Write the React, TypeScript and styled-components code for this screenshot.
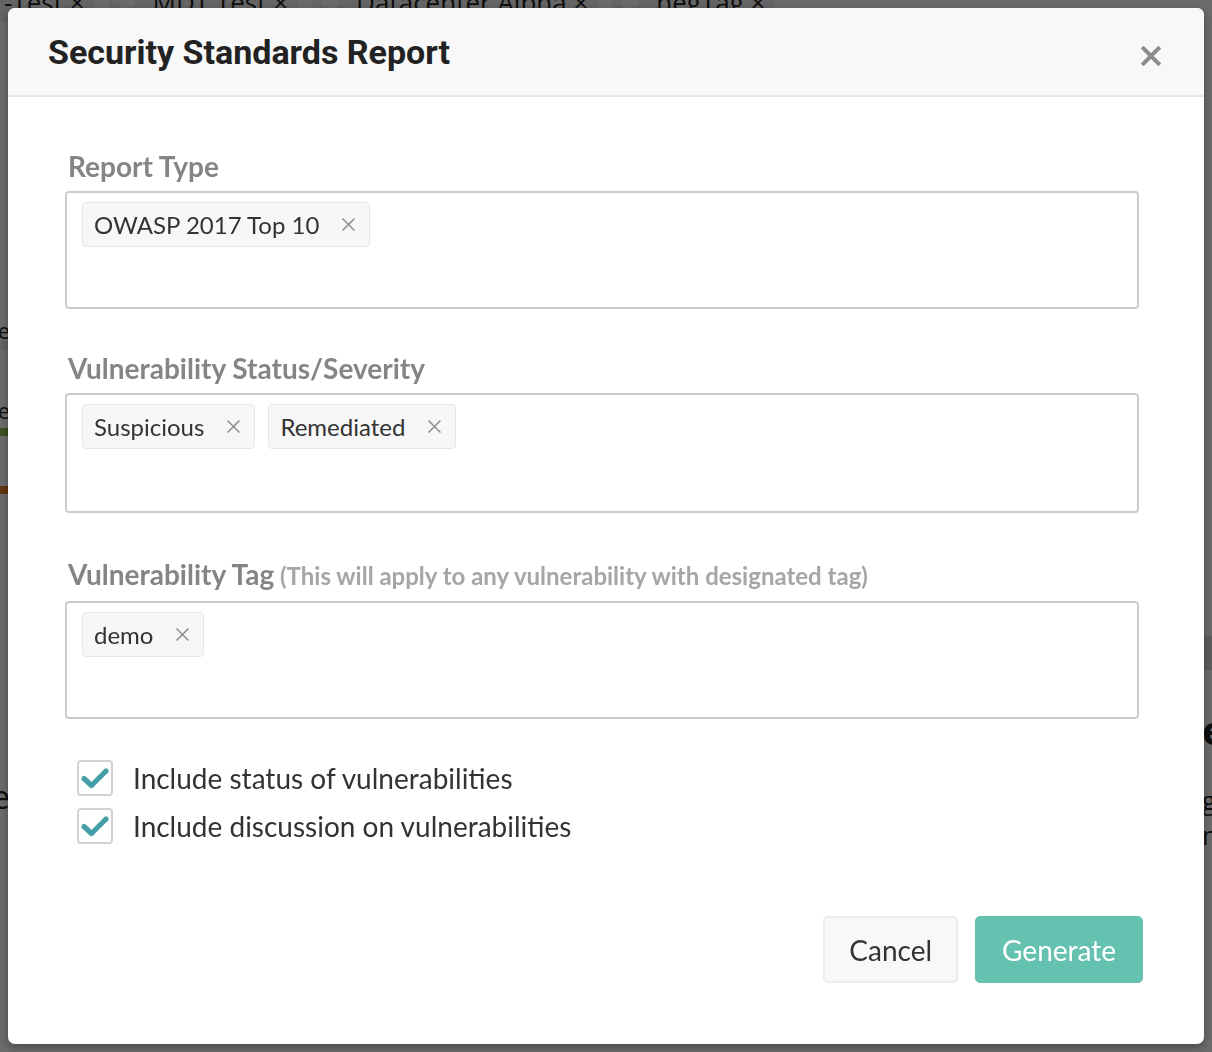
import React from "react";
import styled, { createGlobalStyle } from "styled-components";

const GlobalStyle = createGlobalStyle`
  html, body { margin: 0; padding: 0; }
  body {
    background: #ffffff;
    font-family: Lato, "Open Sans", sans-serif;
    overflow: hidden;
  }
`;

/* ---------- background page (dimmed) ---------- */
const BgPage = styled.div`
  width: 1212px;
  height: 1052px;
  background: #ffffff;
  display: flex;
  flex-direction: column;
  overflow: hidden;
`;

const BgTagBar = styled.div`
  display: flex;
  align-items: center;
  gap: 14px;
  margin-top: -18px;
  margin-left: -6px;
  height: 40px;
  font-family: "Open Sans", sans-serif;
  font-size: 26px;
  color: #222;
`;

const BgTag = styled.div`
  display: flex;
  align-items: center;
  gap: 18px;
  padding: 0 10px;
  height: 40px;
  background: #f0f0f0;
  border-radius: 4px;
`;

const BgDot = styled.span`
  width: 16px;
  height: 16px;
  border-radius: 50%;
  background: #ffffff;
`;

const BgColumns = styled.div`
  flex: 1;
  display: grid;
  grid-template-columns: 10px 1fr 10px;
`;

const BgSide = styled.div<{ $right?: boolean }>`
  display: flex;
  flex-direction: column;
  overflow: hidden;
  align-items: ${(p) => (p.$right ? "flex-start" : "flex-end")};
  font-family: "Open Sans", sans-serif;
  color: #222;
`;

const BgText = styled.div<{ $top: number; $size: number; $bold?: boolean }>`
  margin-top: ${(p) => p.$top}px;
  font-size: ${(p) => p.$size}px;
  font-weight: ${(p) => (p.$bold ? 700 : 400)};
  line-height: 1;
  white-space: nowrap;
`;

const BgBar = styled.div<{ $top: number; $h: number; $color: string }>`
  margin-top: ${(p) => p.$top}px;
  height: ${(p) => p.$h}px;
  width: 100%;
  flex-shrink: 0;
  background: ${(p) => p.$color};
`;

const Overlay = styled.div`
  position: fixed;
  inset: 0;
  background: rgba(0, 0, 0, 0.58);
`;

/* ---------- modal ---------- */
const Modal = styled.div`
  position: fixed;
  top: 8px;
  left: 8px;
  width: 1196px;
  height: 1036px;
  background: #ffffff;
  border-radius: 7px;
  overflow: hidden;
  display: flex;
  flex-direction: column;
  box-shadow: 0 3px 10px rgba(0, 0, 0, 0.35);
`;

const Header = styled.div`
  display: flex;
  align-items: flex-start;
  justify-content: space-between;
  padding: 24px 42px 23px 40px;
  background: #f8f8f8;
  border-bottom: 2px solid #e6e6e6;
`;

const Title = styled.h2`
  margin: 0;
  font-family: Roboto, "Liberation Sans", sans-serif;
  font-weight: 700;
  font-size: 34px;
  line-height: 40px;
  color: #222222;
`;

const CloseButton = styled.button`
  margin-top: 13px;
  width: 22px;
  height: 22px;
  padding: 0;
  border: none;
  background: transparent;
  display: flex;
  cursor: pointer;
`;

const Body = styled.div`
  flex: 1;
  display: flex;
  flex-direction: column;
  padding: 54px 65px 61px 57px;
`;

const Field = styled.div<{ $gap: number }>`
  display: flex;
  flex-direction: column;
  margin-bottom: ${(p) => p.$gap}px;
`;

const Label = styled.div`
  font-family: Lato, sans-serif;
  font-weight: 700;
  font-size: 28px;
  line-height: 30px;
  color: #858585;
  margin: 0 0 10px 3px;
  white-space: nowrap;
`;

const Hint = styled.span`
  font-size: 24px;
  color: #a6a6a6;
`;

const TagBox = styled.div<{ $h: number }>`
  height: ${(p) => p.$h}px;
  box-sizing: border-box;
  border: 2px solid #cccccc;
  border-radius: 4px;
  padding: 9px 15px;
  display: flex;
  align-items: flex-start;
  flex-wrap: wrap;
  gap: 13px;
`;

const Chip = styled.div`
  display: flex;
  align-items: center;
  height: 45px;
  box-sizing: border-box;
  padding: 0 13px 0 11px;
  background: #f7f7f7;
  border: 1px solid #e6e6e6;
  border-radius: 4px;
  font-family: Lato, sans-serif;
  font-size: 24px;
  color: #333333;
  gap: 22px;
`;

const ChipX = styled.span`
  display: flex;
  width: 15px;
  height: 15px;
`;

const Checks = styled.div`
  display: flex;
  flex-direction: column;
  gap: 12px;
  padding-left: 12px;
  margin-top: 41px;
`;

const CheckRow = styled.label`
  display: flex;
  align-items: center;
  gap: 20px;
  font-family: Lato, sans-serif;
  font-size: 28px;
  line-height: 36px;
  color: #333333;
  cursor: pointer;
`;

const CheckBox = styled.span`
  width: 36px;
  height: 36px;
  box-sizing: border-box;
  border: 2px solid #d2d2d2;
  border-radius: 4px;
  background: #fff;
  display: flex;
  align-items: center;
  justify-content: center;
`;

const Footer = styled.div`
  margin-top: auto;
  display: flex;
  justify-content: flex-end;
  gap: 17px;
  margin-right: -4px;
`;

const Button = styled.button<{ $primary?: boolean }>`
  height: 67px;
  box-sizing: border-box;
  padding: 0 ${(p) => (p.$primary ? 26 : 24)}px;
  border-radius: 5px;
  font-family: Lato, sans-serif;
  font-size: 28px;
  cursor: pointer;
  border: ${(p) => (p.$primary ? "1px solid #66c2b0" : "2px solid #ececec")};
  background: ${(p) => (p.$primary ? "#66c2b0" : "#f8f8f8")};
  color: ${(p) => (p.$primary ? "#ffffff" : "#333333")};
`;

const XIcon = ({ size, stroke, color }: { size: number; stroke: number; color: string }) => (
  <svg width={size} height={size} viewBox="0 0 20 20">
    <path d="M2 2 L18 18 M18 2 L2 18" stroke={color} strokeWidth={stroke} strokeLinecap="butt" fill="none" />
  </svg>
);

const CheckIcon = () => (
  <svg width="28" height="24" viewBox="0 0 28 24">
    <path d="M3 12.5 L10.5 19.5 L25 5" stroke="#46a1a6" strokeWidth="5.2" strokeLinecap="round" strokeLinejoin="round" fill="none" />
  </svg>
);

const Tag = ({ label }: { label: string }) => (
  <Chip>
    {label}
    <ChipX>
      <XIcon size={15} stroke={1.9} color="#8a8a8a" />
    </ChipX>
  </Chip>
);

export default function App() {
  return (
    <>
      <GlobalStyle />
      <BgPage>
        <BgTagBar>
          <BgTag>-Test ×</BgTag>
          <BgTag>
            <BgDot />
            MDT Test ×
          </BgTag>
          <BgTag>
            <BgDot />
            Datacenter Alpha ×
          </BgTag>
          <BgTag>
            <BgDot />
            negTag ×
          </BgTag>
        </BgTagBar>
        <BgColumns>
          <BgSide>
            <BgText $top={297} $size={22}>Type</BgText>
            <BgBar $top={0} $h={10} $color="#eeeeee" />
            <BgText $top={48} $size={22}>Type</BgText>
            <BgBar $top={7} $h={8} $color="#8bc34a" />
            <BgBar $top={50} $h={8} $color="#e67e22" />
            <BgText $top={287} $size={32}>Name</BgText>
          </BgSide>
          <div />
          <BgSide $right>
            <BgBar $top={614} $h={34} $color="#dddddd" />
            <BgText $top={40} $size={40} $bold>ee</BgText>
            <BgText $top={37} $size={26}>gg</BgText>
            <BgText $top={9} $size={26}>nn</BgText>
          </BgSide>
        </BgColumns>
      </BgPage>
      <Overlay />
      <Modal>
        <Header>
          <Title>Security Standards Report</Title>
          <CloseButton aria-label="Close">
            <XIcon size={22} stroke={3.6} color="#8c8c8c" />
          </CloseButton>
        </Header>
        <Body>
          <Field $gap={44}>
            <Label>Report Type</Label>
            <TagBox $h={118}>
              <Tag label="OWASP 2017 Top 10" />
            </TagBox>
          </Field>
          <Field $gap={46}>
            <Label>Vulnerability Status/Severity</Label>
            <TagBox $h={120}>
              <Tag label="Suspicious" />
              <Tag label="Remediated" />
            </TagBox>
          </Field>
          <Field $gap={0}>
            <Label>
              Vulnerability Tag
              <Hint> (This will apply to any vulnerability with designated tag)</Hint>
            </Label>
            <TagBox $h={118}>
              <Tag label="demo" />
            </TagBox>
          </Field>
          <Checks>
            <CheckRow>
              <CheckBox>
                <CheckIcon />
              </CheckBox>
              Include status of vulnerabilities
            </CheckRow>
            <CheckRow>
              <CheckBox>
                <CheckIcon />
              </CheckBox>
              Include discussion on vulnerabilities
            </CheckRow>
          </Checks>
          <Footer>
            <Button>Cancel</Button>
            <Button $primary>Generate</Button>
          </Footer>
        </Body>
      </Modal>
    </>
  );
}
